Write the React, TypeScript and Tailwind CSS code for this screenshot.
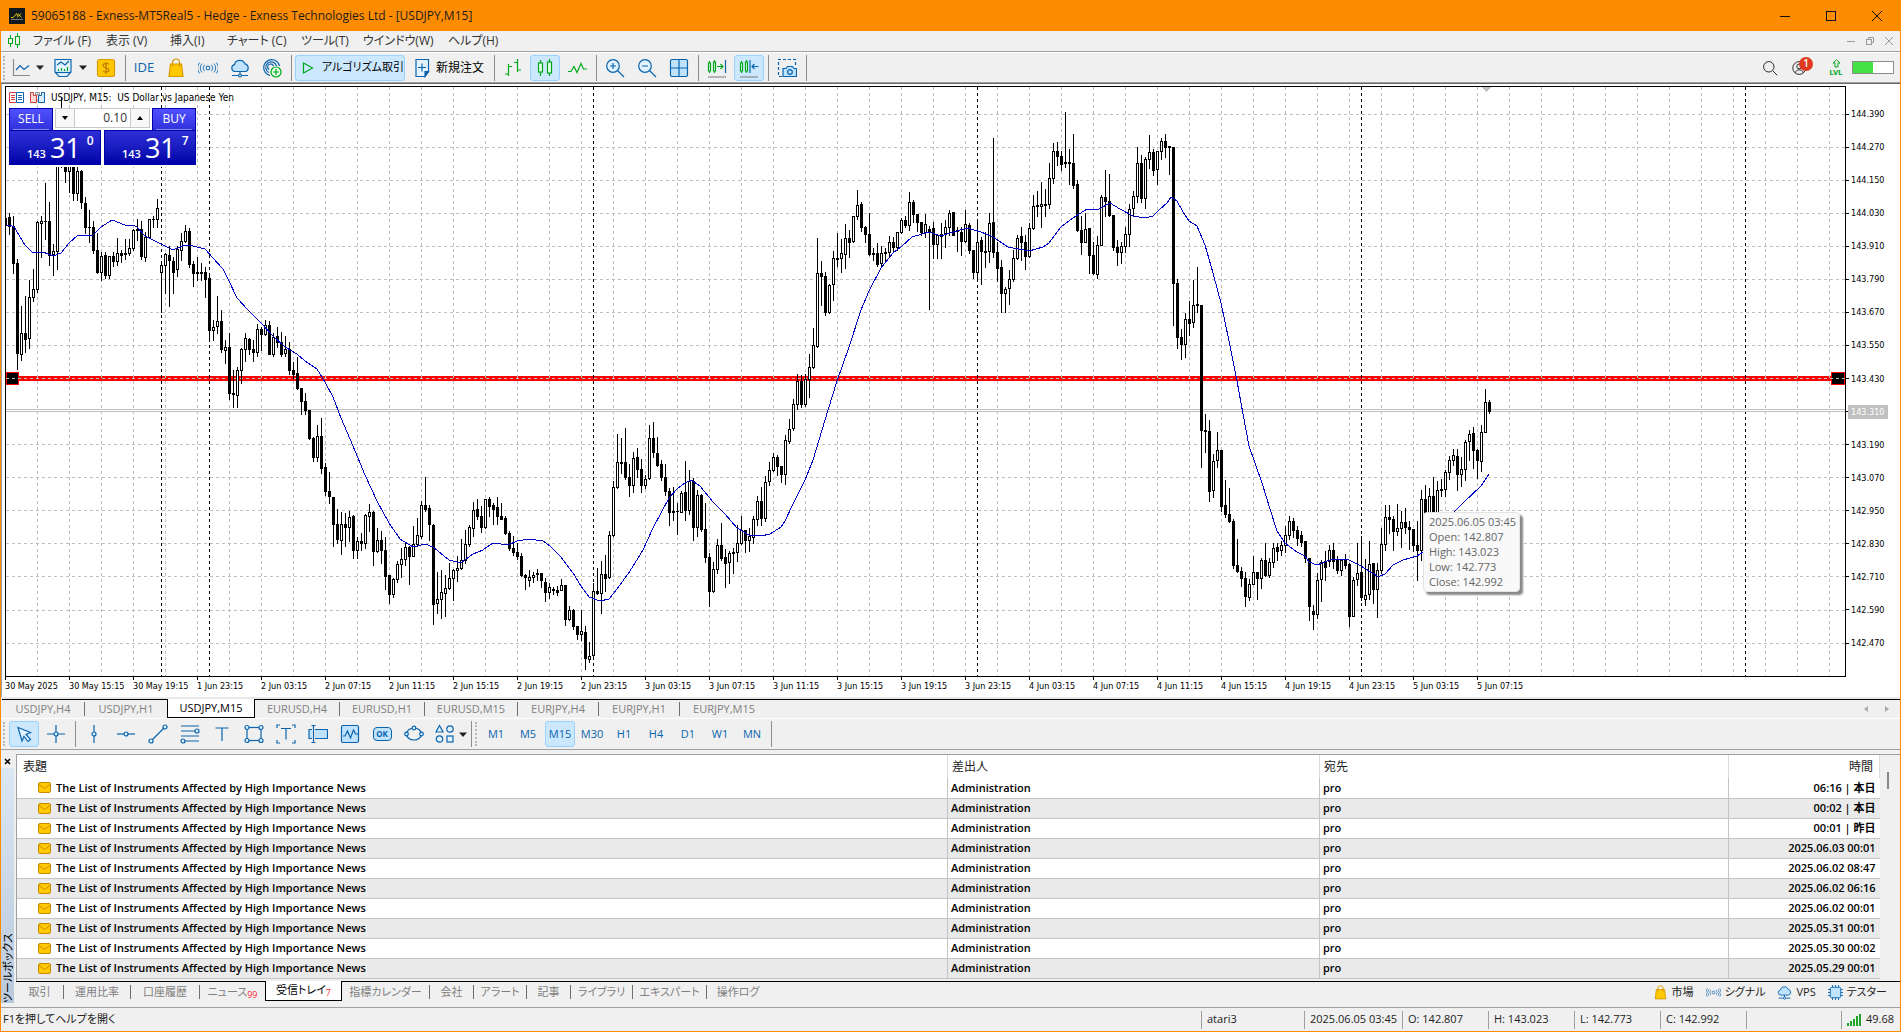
import { useState } from "react";
import type { ReactNode } from "react";

interface Run {
  top: number;
  unit: number;
  bars: string;
}

// high,top,bottom,low,filled for every M15 bar; one run per scale
const RUNS: Run[] = [
  {
    top: -7,
    unit: 2.529,
    bars: `345,350,366,372,1 337,349,371,391,1 346,370,464,490,1 453,463,692,733,1 572,641,694,710,0 548,641,657,690,1 508,549,654,678,0 478,530,549,560,0
358,360,530,538,0 345,358,362,448,0 263,357,359,404,1 311,358,443,469,1 417,433,442,495,0 200,205,433,480,0 47,100,215,222,0 150,180,231,258,1
150,190,231,285,0 160,200,288,304,1 200,231,288,306,0 228,231,310,326,1 298,312,373,388,1 331,372,374,411,1 358,372,430,440,1 388,430,486,490,1
436,446,487,507,0 436,444,495,502,1 446,447,495,502,0 435,446,459,472,1 400,438,459,468,0 430,438,443,462,1 403,438,442,455,0 404,427,438,444,0
378,380,426,430,0 354,379,381,405,1 357,379,447,453,1 386,398,449,460,0 352,353,398,402,0 346,352,354,372,1 302,325,353,372,0 458,468,487,587,0
438,441,468,539,0 420,443,457,574,1 448,458,487,539,1 422,428,480,496,0 389,408,430,456,0 369,384,409,410,0 376,384,467,474,1 460,466,490,521,1
450,488,490,507,1 464,488,490,507,1 474,488,505,550,1 498,501,634,658,1 609,625,634,658,0 547,610,624,640,0 582,610,682,690,1 660,676,684,716,0
640,676,793,809,1 735,793,796,829,1 727,735,798,829,0 679,682,735,768,0 640,655,682,712,0 654,656,682,693,1 660,681,690,711,1 618,630,688,700,0
625,630,643,684,1 607,622,643,645,0 612,622,693,694,1 640,652,694,700,0 627,648,664,676,1 638,664,693,700,1 649,681,691,700,0 665,682,735,744,1
715,734,746,754,1 703,741,780,783,1 780,780,813,846,1 792,813,836,846,1 835,836,906,910,1 905,906,955,966,1 873,901,954,964,0 856,901,983,996,1
970,981,1041,1051,1 993,1040,1054,1072,1 1055,1056,1124,1179,1 1087,1125,1162,1171,1 1095,1124,1164,1201,0 1096,1125,1132,1180,1 1092,1106,1131,1166,0 1101,1105,1190,1209,1
1158,1166,1190,1211,0 1147,1166,1173,1190,1 1100,1101,1172,1184,0 1073,1093,1104,1142,0 1092,1094,1193,1229,1 1133,1164,1193,1195,0 1142,1164,1190,1222,1 1156,1190,1255,1289,1
1253,1253,1300,1323,1 1260,1263,1300,1309,0 1218,1225,1264,1270,0 1186,1212,1226,1258,0 1172,1182,1212,1229,0 1180,1182,1204,1277,1 1128,1174,1204,1206,0 1110,1153,1175,1181,0
1066,1076,1155,1160,0 1005,1076,1086,1092,1 1076,1083,1124,1165,1 1125,1126,1327,1377,1 1246,1313,1325,1350,0 1240,1295,1315,1361,0 1253,1287,1298,1356,0 1222,1260,1287,1288,0
1238,1240,1260,1317,0 1206,1235,1241,1268,0 1163,1215,1236,1238,0 1139,1174,1214,1222,0 1127,1131,1174,1180,0 1068,1088,1135,1155,0 1062,1086,1104,1112,1 1078,1103,1131,1145,1
1060,1060,1131,1133,0 1056,1060,1078,1104,1 1070,1077,1085,1125,1 1055,1080,1104,1124,1`,
  },
  {
    top: 93,
    unit: 3,
    bars: `970,1009,1017,1019,1 1008,1015,1061,1062,1 1053,1060,1106,1111,1 1069,1105,1118,1127,1 1090,1117,1130,1139,1 1120,1129,1187,1190,1 1182,1185,1193,1229,1 1171,1191,1202,1218,0
1177,1187,1193,1206,0 1167,1180,1184,1200,1 1180,1180,1202,1223,1 1196,1206,1237,1265,1 1211,1221,1236,1256,0 1223,1228,1232,1244,1 1220,1230,1236,1247,1 1199,1216,1230,1232,0
1216,1216,1319,1337,1 1280,1291,1319,1322,0 1288,1290,1339,1348,1 1338,1339,1363,1377,1 1290,1354,1364,1382,0 1338,1357,1435,1469,1 1386,1429,1437,1448,0 1210,1234,1427,1436,0
1164,1234,1239,1243,1 1143,1183,1241,1299,0 1125,1183,1195,1233,1 1053,1066,1193,1196,0 904,922,1066,1068,0 762,847,922,925,0 774,846,849,880,1 744,847,892,899,1
852,892,917,948,1 816,836,917,937,0 804,832,868,892,1 837,868,917,938,1 885,898,917,926,0 735,775,895,897,0 727,775,818,831,1 771,820,856,858,1
840,853,892,900,1 852,892,934,945,1 925,934,997,1035,1 921,993,997,1020,1 970,993,995,1062,1 934,940,997,998,0 843,937,991,1022,1 870,903,990,1002,0
894,904,1043,1080,1 930,946,1042,1068,0 942,946,1048,1054,1 970,1048,1133,1147,1 1119,1132,1235,1280,1 1147,1168,1234,1238,0 1077,1096,1168,1181,0 1030,1096,1135,1142,1
1108,1133,1151,1223,1 1114,1120,1147,1209,0 1106,1118,1121,1181,1 1036,1090,1118,1145,0 1009,1051,1091,1093,0 1050,1051,1082,1118,1 1046,1069,1081,1115,0 1010,1018,1072,1091,0
948,964,1018,1035,0 922,964,1015,1037,1 889,907,1015,1025,0 847,871,904,915,0 820,832,871,874,0 825,832,859,886,1 858,859,883,906,1 766,781,883,914,0
717,748,784,790,0 657,673,745,751,0 582,604,673,689,0 586,604,673,682,1 583,598,673,678,0 522,562,597,651,0 445,496,562,566,0 174,280,499,502,0
243,280,290,377,1 277,290,398,406,1 313,316,397,399,0 213,235,313,361,0 159,235,238,258,1 177,220,234,276,0 132,175,222,264,0 150,175,186,231,1
108,109,184,187,0 30,76,108,118,0 67,73,142,154,1 138,141,163,187,1 99,163,223,225,1 205,220,224,242,1 189,220,254,260,1 199,220,251,259,0
204,217,221,248,0 168,187,217,229,0 172,187,203,216,1 156,157,202,211,0 114,121,157,160,0 108,121,136,142,1 36,67,136,150,0 60,67,102,127,1
102,102,127,153,1 126,127,158,165,1 102,133,157,171,0 138,147,153,387,1 126,145,193,235,1 165,166,193,235,0 129,163,168,235,1 121,142,160,202,0
90,99,142,165,0 96,97,165,166,1 141,150,154,213,1`,
  },
  {
    top: -7,
    unit: 2.529,
    bars: `372,385,409,444,1 331,366,408,411,0 364,367,431,440,1 430,431,487,501,1 354,410,487,502,0 398,407,434,516,1 386,434,436,474,1 337,363,434,462,0
147,360,436,448,1 410,436,477,510,1 456,475,540,587,1 526,530,540,588,0 481,504,528,567,0 432,451,504,510,0 392,401,451,453,0 374,397,411,456,1
392,411,447,478,1 364,375,447,448,0 292,320,376,378,0 283,317,321,346,1 258,315,320,372,0 276,314,317,346,1 212,248,315,326,0 160,180,248,262,0
159,182,194,217,1 180,193,214,228,1 83,209,211,222,1 175,209,211,264,1 137,210,266,275,1 255,264,381,384,1 346,380,411,442,1 337,378,411,412,0
375,375,444,490,1 411,444,490,492,1 397,418,492,503,0 291,297,418,419,0 230,297,308,346,1 240,307,342,345,1 342,343,424,430,1 406,423,437,468,1
411,421,436,465,0 372,390,421,437,0 315,327,390,421,0 283,294,325,346,0 170,210,294,310,0 192,210,300,310,1 196,201,299,325,0 140,183,200,224,0
175,183,228,242,1 180,181,227,264,0 149,155,181,202,0 137,155,171,197,1 168,169,171,238,1 170,171,514,620,1 505,514,652,678,1 630,651,669,706,1
590,605,669,702,0 561,605,615,646,1 507,570,614,625,0 473,568,571,588,1 570,571,886,979,1 847,886,889,942,1 860,889,1041,1065,1 947,965,1038,1057,0
892,937,963,980,0 936,937,1078,1092,1 1014,1076,1100,1107,1 1034,1099,1116,1118,1 1111,1116,1228,1236,1 1163,1228,1244,1246,1 1232,1243,1261,1281,1 1246,1260,1307,1332,1
1262,1275,1308,1317,0 1206,1246,1276,1277,0 1245,1246,1261,1314,1 1209,1215,1261,1286,0 1172,1215,1253,1256,1 1210,1220,1252,1257,0 1173,1185,1220,1232,0 1172,1182,1193,1214,1
1166,1178,1190,1203,0 1130,1152,1178,1195,0 1105,1116,1152,1162,0 1110,1116,1140,1156,1 1129,1139,1160,1177,1 1142,1153,1170,1180,1 1166,1168,1211,1221,1 1209,1211,1332,1368,1
1328,1343,1352,1390,1 1248,1266,1352,1361,0 1214,1220,1264,1320,0 1193,1217,1232,1267,1 1176,1190,1217,1231,0 1171,1190,1218,1236,1 1206,1216,1241,1247,1 1214,1215,1241,1254,0
1201,1214,1228,1235,1 1224,1225,1357,1383,1 1258,1266,1357,1358,0 1172,1247,1264,1278,0 1155,1245,1309,1316,1 1213,1303,1313,1330,0 1166,1225,1300,1313,0 1222,1224,1289,1325,1
1224,1240,1288,1360,0 1133,1174,1240,1248,0`,
  },
  {
    top: 263,
    unit: 3,
    bars: `465,501,583,600,0 465,501,509,551,1 498,507,544,600,1 462,535,545,557,0 483,517,535,591,0 475,517,531,551,1 513,531,539,599,1 537,538,586,604,1
513,586,602,690,1 420,448,601,630,0 405,448,500,560,1 414,439,560,600,0 381,439,520,560,1 393,421,540,560,0 387,418,421,438,1 360,367,418,440,0
318,331,367,388,0 297,316,331,345,0 297,319,374,422,1 321,358,374,408,0 271,277,358,392,0 240,253,274,330,0 231,250,301,355,1 298,300,331,384,1
226,246,334,365,0 117,157,247,248,0 150,157,185,189,1`,
  },
];

const candles = RUNS.flatMap(({ top, unit, bars }) =>
  bars.split(/\s+/).map((bar) => {
    const [high, open, close, low, filled] = bar.split(",").map(Number);
    const y = (v: number) => Math.floor(top + v / unit);
    return { high: y(high), open: y(open), close: y(close), low: y(low), filled: filled === 1 };
  })
);

const AVERAGE = [
  { left: -6, top: -7, unit: 2.529, points: "17,370 34,366 45,374 60,398 75,417 98,438 130,436 160,446 184,437 208,411 235,393 280,393 304,372 335,355 376,367 400,366 412,373 436,395 484,416 520,429 556,418 580,420 615,428 640,450 670,477 688,509 712,551 745,581 784,615 820,647 856,675 892,693 916,711 952,730 976,765 1000,801 1024,856 1060,925 1096,1000 1132,1064 1168,1120 1200,1162 1240,1180 1276,1174 1300,1182 1348,1214 1384,1222 1420,1200 1450,1188" },
  { left: 474, top: 93, unit: 3, points: "12,1106 40,1090 85,1094 112,1082 148,1078 190,1084 210,1098 244,1132 280,1180 304,1217 328,1250 360,1264 388,1257 412,1228 450,1173 490,1110 520,1045 568,955 592,928 616,908 632,901 660,918 700,965 735,1002 772,1043 808,1065 844,1069 870,1062 904,1040 916,1022 940,972 976,900 1000,840 1036,720 1072,604 1108,500 1144,390 1168,333 1204,265 1240,220 1264,202 1295,172 1348,156 1384,169 1410,159 1430,153" },
  { left: 894, top: -7, unit: 2.529, points: "172,381 200,375 244,384 280,397 325,423 388,433 430,422 448,411 484,372 520,348 560,325 590,328 630,312 660,327 700,343 735,348 760,344 780,327 800,310 812,295 830,305 850,333 868,357 892,370 916,418 940,488 964,565 988,660 1012,760 1030,845 1048,925 1085,1020 1110,1085 1132,1141 1156,1171 1192,1194 1215,1205 1228,1218 1252,1226 1290,1213 1340,1211 1384,1228 1432,1255" },
  { left: 1374, top: 263, unit: 3, points: "0,679 15,673 40,645 70,629 112,618 128,607 140,590 180,540 225,482 250,460 304,408 326,373" },
];

const averageLine = AVERAGE.flatMap(({ left, top, unit, points }) =>
  points.split(" ").map((p) => {
    const [x, y] = p.split(",").map(Number);
    return `${Math.round(left + x / 3)},${Math.round(top + y / unit)}`;
  })
).join(" ");

const PRICES = ["144.390", "144.270", "144.150", "144.030", "143.910", "143.790", "143.670", "143.550", "143.430", "143.310", "143.190", "143.070", "142.950", "142.830", "142.710", "142.590", "142.470"];
const TIMES = ["30 May 2025", "30 May 15:15", "30 May 19:15", "1 Jun 23:15", "2 Jun 03:15", "2 Jun 07:15", "2 Jun 11:15", "2 Jun 15:15", "2 Jun 19:15", "2 Jun 23:15", "3 Jun 03:15", "3 Jun 07:15", "3 Jun 11:15", "3 Jun 15:15", "3 Jun 19:15", "3 Jun 23:15", "4 Jun 03:15", "4 Jun 07:15", "4 Jun 11:15", "4 Jun 15:15", "4 Jun 19:15", "4 Jun 23:15", "5 Jun 03:15", "5 Jun 07:15"];
const DAY_BREAKS = [155, 203, 587, 971, 1355, 1739];

const MENUS = [
  { label: "ファイル (F)", width: "w-[73px]" },
  { label: "表示 (V)", width: "w-16" },
  { label: "挿入(I)", width: "w-[57px]" },
  { label: "チャート (C)", width: "w-[74px]" },
  { label: "ツール(T)", width: "w-[62px]" },
  { label: "ウインドウ(W)", width: "w-[85px]" },
  { label: "ヘルプ(H)", width: "w-16" },
];

const CHART_TABS = [
  { label: "USDJPY,H4", width: "w-[83px]" },
  { label: "USDJPY,H1", width: "w-[82px]" },
  { label: "USDJPY,M15", width: "w-[88px]" },
  { label: "EURUSD,H4", width: "w-[85px]" },
  { label: "EURUSD,H1", width: "w-[85px]" },
  { label: "EURUSD,M15", width: "w-[93px]" },
  { label: "EURJPY,H4", width: "w-[81px]" },
  { label: "EURJPY,H1", width: "w-[81px]" },
  { label: "EURJPY,M15", width: "w-[88px]" },
];

const TOOLBOX_TABS = [
  { label: "取引", width: "w-12" },
  { label: "運用比率", width: "w-[67px]" },
  { label: "口座履歴", width: "w-[69px]" },
  { label: "ニュース", width: "w-[65px]", count: "99" },
  { label: "受信トレイ", width: "w-[77px]", count: "7" },
  { label: "指標カレンダー", width: "w-[88px]" },
  { label: "会社", width: "w-11" },
  { label: "アラート", width: "w-[53px]" },
  { label: "記事", width: "w-11" },
  { label: "ライブラリ", width: "w-[62px]" },
  { label: "エキスパート", width: "w-[74px]" },
  { label: "操作ログ", width: "w-[62px]" },
];

const MAIL_TIMES = ["06:16 | 本日", "00:02 | 本日", "00:01 | 昨日", "2025.06.03 00:01", "2025.06.02 08:47", "2025.06.02 06:16", "2025.06.02 00:01", "2025.05.31 00:01", "2025.05.30 00:02", "2025.05.29 00:01"];
const PERIODS = ["M1", "M5", "M15", "M30", "H1", "H4", "D1", "W1", "MN"];

function Icon({ children, size = 20, color = "#0a64ad" }: { children: ReactNode; size?: number; color?: string }) {
  return (
    <svg width={size} height={size} viewBox="0 0 20 20" fill="none" stroke={color} strokeWidth="1.2" className="shrink-0">
      {children}
    </svg>
  );
}

const Arrow = () => (
  <svg width="8" height="5" viewBox="0 0 8 5" className="shrink-0"><path d="M0 0.5h8L4 5z" fill="#222" /></svg>
);

const BagIcon = ({ size = 20 }: { size?: number }) => (
  <Icon size={size} color="#d99a00">
    <path d="M6.5 6V4.500a3.500 3.500 0 0 1 7 0V6" />
    <path d="M4.500 6h11l1.500 12.500h-14z" fill="#ffc800" />
    <path d="M6.500 5v4M13.500 5v4" />
  </Icon>
);
const SignalIcon = ({ size = 20 }: { size?: number }) => (
  <Icon size={size} color="#2c7ab8">
    <circle cx="10" cy="10" r="1.800" />
    <path d="M6.500 6.800a4.800 4.800 0 0 0 0 6.400M13.500 6.800a4.800 4.800 0 0 1 0 6.400M4 5.500a7 7 0 0 0 0 9M16 5.500a7 7 0 0 1 0 9M1.600 4.500a9.500 9.500 0 0 0 0 11M18.400 4.500a9.500 9.500 0 0 1 0 11" strokeWidth="1" />
  </Icon>
);
const CloudIcon = ({ size = 20 }: { size?: number }) => (
  <Icon size={size}>
    <path d="M5 13.500a3.500 3.500 0 0 1-.5-6.900A5.500 5.500 0 0 1 15 5.800a4 4 0 0 1 .5 7.700z" fill="#bfe3ff" />
    <path d="M10 13.500V16M2 17.500h6M12 17.500h6" />
    <circle cx="10" cy="17.500" r="1.500" />
  </Icon>
);

interface ToolProps {
  label: string;
  children: ReactNode;
  active?: boolean;
  width?: string;
}

function Tool({ label, children, active = false, width = "w-[30px] justify-center" }: ToolProps) {
  return (
    <button
      type="button"
      aria-label={label}
      className={`flex h-[26px] shrink-0 items-center rounded-[3px] border ${width} ${active ? "border-[#99d1ff] bg-[#cce8ff]" : "border-transparent"}`}
    >
      {children}
    </button>
  );
}

const Divider = () => (
  <div className="flex h-[26px] w-1 shrink-0 justify-center"><div className="w-px bg-[#8c8c8c]" /></div>
);
const Grip = () => <div className="h-6 w-1 shrink-0 border-l-2 border-dotted border-[#b8b8b8]" />;

function TitleBar() {
  return (
    <header className="flex h-[31px] items-center bg-[#ff8c00] pl-2">
      <svg width="16" height="16" viewBox="0 0 16 16" className="mr-1.5">
        <rect width="16" height="16" fill="#111820" />
        <path d="M2 9.500h2.500l3-4 1.500 3M9 5.500l3.500 4M8 9.500l4-4" stroke="#e0c000" fill="none" />
        <path d="M2 11.500h12" stroke="#777" />
      </svg>
      <h1 className="grow text-xs text-[#1c1c1c]">59065188 - Exness-MT5Real5 - Hedge - Exness Technologies Ltd - [USDJPY,M15]</h1>
      <button type="button" aria-label="Minimize" className="flex w-[46px] justify-center">
        <svg width="10" height="10" stroke="#111"><path d="M0 5.500h10" /></svg>
      </button>
      <button type="button" aria-label="Maximize" className="flex w-[46px] justify-center">
        <svg width="10" height="10" stroke="#111" fill="none"><rect x=".5" y=".5" width="9" height="9" /></svg>
      </button>
      <button type="button" aria-label="Close" className="flex w-[46px] justify-center">
        <svg width="10" height="10" stroke="#111"><path d="M0 0l10 10M10 0L0 10" /></svg>
      </button>
    </header>
  );
}

function MenuBar() {
  return (
    <nav className="flex h-[21px] items-center border-b border-[#a0a0a0] pl-1.5 text-xs text-[#333] [font-feature-settings:'palt']">
      <svg width="14" height="16" viewBox="0 0 14 16" fill="none" stroke="#00a81c" className="mr-3">
        <path d="M3.500 2v3M3.500 11v3M10.500 0v3M10.500 12v3" />
        <rect x="1.500" y="5.500" width="4" height="5" />
        <rect x="8.500" y="3.500" width="4" height="8" />
      </svg>
      {MENUS.map((menu) => (
        <button key={menu.label} type="button" className={`shrink-0 text-left whitespace-nowrap ${menu.width}`}>{menu.label}</button>
      ))}
      <div className="ml-auto flex gap-[9px] pr-1.5">
        <button type="button" aria-label="Minimize chart"><svg width="10" height="10" stroke="#999"><path d="M1 5.500h8" /></svg></button>
        <button type="button" aria-label="Restore chart">
          <svg width="10" height="10" stroke="#999" fill="none"><rect x="1.500" y="3.500" width="5" height="5" /><path d="M3.500 3V1.500h5v5H7" /></svg>
        </button>
        <button type="button" aria-label="Close chart"><svg width="10" height="10" stroke="#999"><path d="M1 1l8 8M9 1L1 9" /></svg></button>
      </div>
    </nav>
  );
}

function MainToolbar() {
  return (
    <div className="flex h-[31px] items-center gap-0.5 border-t border-b border-t-white border-b-[#a0a0a0] pl-0.5 text-xs [font-feature-settings:'palt']">
      <Grip />
      <Tool label="Line chart" width="w-[37px] gap-1.5">
        <Icon><path d="M3.500 1v16.500H20" stroke="#8c8c8c" /><path d="M6 12l4-4.500 4 4 5-4" /></Icon>
        <Arrow />
      </Tool>
      <Tool label="Templates" width="w-[41px] gap-1.5 pl-1">
        <Icon><path d="M2 1.500h16v12.500l-4 4.500H6L2 14z" fill="#e2f2ff" /><path d="M4 7l4-3 4 3 4-4" /><path d="M5.500 13v-2M8.500 13v-3M11.500 13v-2M14.500 13v-4" stroke="#00a81c" /><path d="M2 14.500h16" /></Icon>
        <Arrow />
      </Tool>
      <Tool label="Symbols">
        <Icon color="#d99a00"><rect x="1.500" y="1.500" width="17" height="17" rx="2" fill="#ffc800" /><path d="M13 6.500c-1-1.500-6-1.500-6 1s6 2 6 4.500-5 2.500-6 1M10 4v12" stroke="#b87a00" /></Icon>
      </Tool>
      <Divider />
      <Tool label="IDE"><span className="text-[13px] text-[#0a64ad]">IDE</span></Tool>
      <Tool label="Market"><BagIcon /></Tool>
      <Tool label="Signals"><SignalIcon /></Tool>
      <Tool label="VPS"><CloudIcon /></Tool>
      <Tool label="Copy trading">
        <Icon><path d="M8 17.500A8 8 0 1 1 17.500 8M7 14.500A5.500 5.500 0 1 1 14.500 8M7 11.500A3 3 0 1 1 11.500 8" /><circle cx="14" cy="14" r="5" stroke="#00a81c" fill="#e6ffe9" /><path d="M14 11v6M11 14h6" stroke="#00a81c" /></Icon>
      </Tool>
      <Divider />
      <Tool label="アルゴリズム取引" active width="w-[110px] gap-1 pl-0.5">
        <Icon color="#00a81c"><path d="M5.500 5l9 5-9 5z" /></Icon>
        <span className="text-[11px] whitespace-nowrap">アルゴリズム取引</span>
      </Tool>
      <Tool label="新規注文" width="w-[83px] gap-1 pl-1">
        <Icon><path d="M4 1.500h12.500v12L13 18.500H4z" fill="#e2f2ff" /><path d="M10 5.500v8M6 9.500h8" /><path d="M16.500 13.500H13v5z" fill="#0a64ad" /></Icon>
        <span>新規注文</span>
      </Tool>
      <Divider />
      <Tool label="Bar chart"><Icon color="#00a81c"><path d="M5.500 6v12M2 16h3.500M5.500 8.500H9M14.500 1v13M11 4.500h3.500M14.500 12H18" /></Icon></Tool>
      <Tool label="Candlesticks" active>
        <Icon color="#00a81c"><path d="M5.500 2v16M14.500 1v17" /><rect x="3.500" y="5" width="4" height="9" fill="#e6ffe9" /><rect x="12.500" y="4" width="4" height="11" fill="#e6ffe9" /></Icon>
      </Tool>
      <Tool label="Line"><Icon color="#00a81c"><path d="M1 13.500h3l3-5 3 6 4-9 2.500 5.500H20" /></Icon></Tool>
      <Divider />
      <Tool label="Zoom in"><Icon><circle cx="8" cy="8" r="6.300" fill="#e2f2ff" /><path d="M12.500 12.500l6.500 6.500M8 5v6M5 8h6" /></Icon></Tool>
      <Tool label="Zoom out"><Icon><circle cx="8" cy="8" r="6.300" fill="#e2f2ff" /><path d="M12.500 12.500l6.500 6.500M5 8h6" /></Icon></Tool>
      <Tool label="Tile windows"><Icon><rect x="1.500" y="1.500" width="17" height="17" rx="1.500" fill="#bfe3ff" /><path d="M10 1.500v17M1.500 10h17" /></Icon></Tool>
      <Divider />
      <Tool label="Auto scroll">
        <Icon><g stroke="#00a81c"><path d="M2.500 3v12M7.500 2v13M10 8.500h6M13.500 6l2.500 2.500-2.500 2.500" /><path d="M1.500 5h2v8h-2zM6.500 4h2v9h-2z" fill="#f0f0f0" /></g><path d="M18.500 2v13" /><path d="M1 19h18" stroke="#8c8c8c" /></Icon>
      </Tool>
      <Tool label="Chart shift" active>
        <Icon><g stroke="#00a81c"><path d="M2.500 3v12M7.500 2v13" /><path d="M1.500 5h2v8h-2zM6.500 4h2v9h-2z" fill="#e6ffe9" /></g><path d="M11 2v13M13 8.500h6.500M15.500 6L13 8.500l2.500 2.500" /><path d="M1 19h18" stroke="#8c8c8c" /></Icon>
      </Tool>
      <Divider />
      <Tool label="Screenshot">
        <Icon><path d="M5 18.500H1.500v-17h17V8" strokeDasharray="3 2" /><path d="M6 10.500h3l1.500-2h5l1.500 2h2.500v8H6z" fill="#bfe3ff" /><circle cx="13" cy="14" r="2.300" /></Icon>
      </Tool>
      <Divider />
      <div className="ml-auto flex items-center pr-1.5">
        <Tool label="Search"><Icon color="#222" size={16}><circle cx="8.500" cy="8.500" r="6.500" /><path d="M13.500 13.500l5.500 5.500" /></Icon></Tool>
        <div className="relative">
          <Tool label="Account"><Icon color="#222" size={16}><circle cx="9" cy="10" r="8" /><circle cx="9" cy="8" r="3" /><path d="M4 16c1-5 9-5 10 0" /></Icon></Tool>
          <span className="absolute top-0.5 left-3.5 flex h-3.5 w-3.5 items-center justify-center rounded-full bg-[#e03a20] text-[10px] font-semibold text-white">1</span>
        </div>
        <div className="ml-1.5 flex w-[30px] flex-col items-center gap-px text-[#00a81c]">
          <svg width="9" height="9" viewBox="0 0 9 9" fill="none" stroke="currentColor" className="block shrink-0"><path d="M4.500 .7L8 4H6v4H3V4H1z" /></svg>
          <span className="font-['Roboto',sans-serif] text-[8px] leading-[8px] font-bold">LVL</span>
        </div>
        <div className="ml-px h-[13px] w-[42px] border border-[#8c8c8c] bg-white"><div className="h-full w-1/2 bg-[#43e243]" /></div>
      </div>
    </div>
  );
}

function QuotePanel() {
  const [volume, setVolume] = useState("0.10");
  return (
    <div className="absolute top-[21px] left-[3px] w-[187px] bg-white pb-0.5 text-white">
      <div className="flex h-[22px] justify-between">
        <button type="button" className="w-11 border border-b-0 border-[#0000a8] bg-linear-to-b from-[#5050ff] to-[#3030dc] px-[3px] text-xs">
          <span className="block h-full border-b border-[#8c8cff] leading-5">SELL</span>
        </button>
        <div className="flex h-5 w-[95px] border border-[#c8c8c8] bg-[#f8f8f8]">
          <button type="button" aria-label="Decrease volume" className="flex w-[19px] items-center justify-center"><svg width="6" height="4"><path d="M0 0h6L3 4z" /></svg></button>
          <input aria-label="Volume" value={volume} onChange={(e) => setVolume(e.target.value)} className="w-[57px] border-x border-[#c8c8c8] bg-white pr-[3px] text-right text-xs text-[#333]" />
          <button type="button" aria-label="Increase volume" className="flex w-[19px] items-center justify-center"><svg width="6" height="4"><path d="M0 4h6L3 0z" /></svg></button>
        </div>
        <button type="button" className="w-11 border border-b-0 border-[#0000a8] bg-linear-to-b from-[#5050ff] to-[#3030dc] px-[3px] text-xs">
          <span className="block h-full border-b border-[#8c8cff] leading-5">BUY</span>
        </button>
      </div>
      <div className="flex h-[35px] justify-between">
        <Price minor="0" />
        <Price minor="7" />
      </div>
    </div>
  );
}

function Price({ minor }: { minor: string }) {
  return (
    <div className="flex w-[92px] border border-[#0000a8] bg-linear-to-b from-[#2e2ed8] to-[#0000a8] pl-[17px]">
      <span className="self-end pb-0.5 text-[11px] font-semibold">143</span>
      <span className="ml-1 self-center text-[27px] leading-8">31</span>
      <span className="ml-1.5 pt-0.5 text-xs font-semibold">{minor}</span>
    </div>
  );
}

function Chart() {
  return (
    <main className="border-t border-l border-t-[#696969] border-l-[#a0a0a0] bg-white pt-0.5 pl-[3px] font-['DejaVu_Sans_Condensed','DejaVu_Sans',sans-serif] text-[9px] text-black">
      <div className="flex">
        <div className="relative h-[591px] min-w-0 grow overflow-hidden border border-black">
          <svg width="100%" height="589" className="block" shapeRendering="crispEdges">
            <rect y="289" width="100%" height="5" fill="red" />
            <rect x=".5" y="285.500" width="12" height="12" stroke="red" />
            <svg x="100%" overflow="visible"><rect x="-13.500" y="285.500" width="13" height="12" stroke="red" /></svg>
            <g stroke="#c0c0c0" strokeDasharray="3 3">
              {Array.from({ length: 70 }, (_, i) => <line key={i} x1={31.5 + i * 32} x2={31.5 + i * 32} y2="589" />)}
              {PRICES.map((price, i) => {
                const y = Math.floor(27 + i * 33.07) + 0.5;
                return <line key={price} y1={y} y2={y} x2="100%" />;
              })}
            </g>
            <g stroke="black" strokeDasharray="3 3">
              {DAY_BREAKS.map((x) => <line key={x} x1={x + 0.5} x2={x + 0.5} y2="589" />)}
            </g>
            <rect y="322" width="100%" height="1" fill="#c0c0c0" />
            <rect y="324" width="100%" height="1" fill="#c0c0c0" />
            {candles.map((c, i) => {
              const x = i * 4 - 1;
              const body = Math.max(c.close - c.open, 0) + 1;
              return (
                <g key={i}>
                  <rect x={x} y={c.high} width="1" height={c.low - c.high + 1} />
                  <rect x={x - 1} y={c.open} width="3" height={body} />
                  {!c.filled && body > 2 && <rect x={x} y={c.open + 1} width="1" height={body - 2} fill="white" />}
                </g>
              );
            })}
            <polyline points={averageLine} fill="none" stroke="#0000c8" />
            <path d="M1475 0h10l-5 5z" fill="#c0c0c0" />
          </svg>
          <div className="absolute top-1 left-[3px] flex items-center text-[10px] leading-[14px] whitespace-pre">
            <svg width="15" height="12" viewBox="0 0 15 12" fill="none" className="mr-1.5">
              <path d="M7.500 .5h-7v10h7M2 3.500h4M2 5.500h4M2 7.500h4" stroke="#d93a3a" />
              <path d="M7.500 .5h7v10h-7zM9 3.500h4M9 5.500h4M9 7.500h4" stroke="#0a64ad" />
            </svg>
            <svg width="15" height="12" viewBox="0 0 15 12" fill="none" className="mr-1.5">
              <path d="M.5 .5h3v3h3v7h-6z" stroke="#d93a3a" fill="#ffd8d8" />
              <path d="M14.500 .5h-3v3h-3v7h6z" stroke="#0a64ad" fill="#d8eeff" />
              <rect x="5.500" y=".5" width="4" height="2" stroke="#999" />
            </svg>
            <span>USDJPY, M15:  US Dollar vs Japanese Yen</span>
          </div>
          <div className="font-['Open_Sans','Noto_Sans_CJK_JP',sans-serif]"><QuotePanel /></div>
          <div className="absolute top-[425px] left-[1417px] h-20 w-[97px] rounded-sm border border-[#e4e4e4] bg-[#f9f9f9] px-[5px] pt-px font-['Open_Sans','Noto_Sans_CJK_JP',sans-serif] text-[11px] leading-[15px] whitespace-nowrap text-[#666] shadow-[3px_3px_2px_#888]">
            <p>2025.06.05 03:45</p>
            <p>Open: 142.807</p>
            <p>High: 143.023</p>
            <p>Low: 142.773</p>
            <p>Close: 142.992</p>
          </div>
        </div>
        <div className="flex h-[563px] w-[54px] shrink-0 flex-col justify-between pt-[22px]">
          {PRICES.map((price) => (
            <div key={price} className="flex h-3 items-center gap-px">
              <div className="h-px w-[3px] bg-black" />
              <span className={price === "143.310" ? "-ml-0.5 bg-[#c0c0c0] py-px pr-1 pl-[3px] leading-3 text-white" : "pl-px leading-3"}>{price}</span>
            </div>
          ))}
        </div>
      </div>
      <div className="flex h-5 overflow-hidden">
        {TIMES.map((time) => (
          <div key={time} className="w-16 shrink-0 leading-3 whitespace-nowrap">
            <div className="h-[3px] w-px bg-black" />
            {time}
          </div>
        ))}
      </div>
    </main>
  );
}

function ChartTabs() {
  return (
    <div className="flex h-[22px] border-t-2 border-b border-t-[#e8e8e8] border-b-white pl-px">
      <div role="tablist" className="flex grow border-t border-black text-xs text-[#808080]">
        {CHART_TABS.map(({ label, width }, i) => (
          <button
            key={label}
            type="button"
            role="tab"
            aria-selected={i === 2}
            className={`flex shrink-0 items-center justify-center whitespace-nowrap ${width} ${i === 2 ? "-mt-px border-x border-b border-black bg-white text-black" : ""}`}
          >
            <span className="grow text-[11px]">{label}</span>
            {i !== 1 && i !== 2 && i !== 8 && <span className="h-3.5 w-px bg-[#707070]" />}
          </button>
        ))}
        <div className="ml-auto flex items-center gap-[17px] pr-[11px]">
          <button type="button" aria-label="Previous tab"><svg width="4" height="6" fill="#aaa"><path d="M4 0v6L0 3z" /></svg></button>
          <button type="button" aria-label="Next tab"><svg width="4" height="6" fill="#aaa"><path d="M0 0v6l4-3z" /></svg></button>
        </div>
      </div>
    </div>
  );
}

function DrawingToolbar() {
  const knot = "#e2f2ff";
  return (
    <div className="flex h-[31px] items-center gap-0.5 border-b border-[#a0a0a0] pl-0.5 text-xs text-[#0a64ad]">
      <Grip />
      <Tool label="Cursor" active><Icon><path d="M4 3.500l12.500 5-4.500 2 4.500 5-2.500 2-4-5-2 4.500z" fill="#e2f2ff" /></Icon></Tool>
      <Tool label="Crosshair"><Icon><path d="M10 1v18M1 10h18" /><circle cx="10" cy="10" r="2" fill={knot} /></Icon></Tool>
      <Divider />
      <Tool label="Vertical line"><Icon><path d="M10 1v18" /><circle cx="10" cy="10" r="2" fill={knot} /></Icon></Tool>
      <Tool label="Horizontal line"><Icon><path d="M1 10h18" /><circle cx="10" cy="10" r="2" fill={knot} /></Icon></Tool>
      <Tool label="Trend line"><Icon><path d="M3 17L17 3" /><circle cx="3" cy="17" r="2" fill={knot} /><circle cx="17" cy="3" r="2" fill={knot} /></Icon></Tool>
      <Tool label="Fibonacci"><Icon><path d="M1 2h18M1 7h14M1 12h18M5 17h14" /><circle cx="17" cy="7" r="2" fill={knot} /><circle cx="3" cy="17" r="2" fill={knot} /></Icon></Tool>
      <Tool label="Text"><Icon><path d="M3.500 4h13M10 4v13" /></Icon></Tool>
      <Tool label="Rectangle">
        <Icon><rect x="3" y="3.500" width="14" height="13" /><g fill={knot}><circle cx="3" cy="3.500" r="2" /><circle cx="17" cy="3.500" r="2" /><circle cx="3" cy="16.500" r="2" /><circle cx="17" cy="16.500" r="2" /></g></Icon>
      </Tool>
      <Tool label="Text label"><Icon><path d="M5 4.500h10M10 4.500v11M1 4V1h3M16 1h3v3M1 16v3h3M16 19h3v-3" /></Icon></Tool>
      <Tool label="Edit"><Icon><path d="M7 5.500h12.500v9H7M4 5.500H1v9h3" fill="#bfe3ff" /><path d="M5.500 2v16M3.500 1.500h4M3.500 18.500h4" /></Icon></Tool>
      <Tool label="Indicator"><Icon><rect x="1.500" y="1.500" width="17" height="17" rx="1.500" fill="#bfe3ff" /><path d="M3 12h2l2.500-5 3 7 3-8 2 4H18" /></Icon></Tool>
      <Tool label="Button">
        <span className="flex h-3.5 w-[19px] items-center justify-center rounded-sm border border-[#0a64ad] bg-[#bfe3ff] text-[8px] font-bold">OK</span>
      </Tool>
      <Tool label="Ellipse">
        <Icon><ellipse cx="10" cy="10" rx="7.500" ry="6" /><g fill={knot}><circle cx="10" cy="4" r="1.800" /><circle cx="2.500" cy="10" r="1.800" /><circle cx="17.500" cy="10" r="1.800" /></g></Icon>
      </Tool>
      <Tool label="Shapes" width="w-9 gap-1 pl-[3px]">
        <Icon><g fill={knot}><path d="M4.500 1.500L8 8H1z" /><circle cx="15" cy="5" r="3.200" /><circle cx="4.500" cy="15" r="3.200" /><rect x="12" y="12" width="6" height="6" /></g></Icon>
        <Arrow />
      </Tool>
      <Divider />
      <Grip />
      {PERIODS.map((period) => (
        <Tool key={period} label={period} active={period === "M15"}><span className="text-[11px]">{period}</span></Tool>
      ))}
      <Divider />
    </div>
  );
}

function Envelope() {
  return (
    <svg width="13" height="11" viewBox="0 0 13 11" fill="#ffc800" stroke="#c98a00" className="shrink-0">
      <rect x=".5" y=".5" width="12" height="10" rx="1.500" />
      <path d="M1 2.500l5.500 4 5.500-4" fill="none" />
    </svg>
  );
}

function Toolbox() {
  return (
    <section className="flex pt-1">
      <div className="flex w-[13px] shrink-0 flex-col items-center">
        <button type="button" aria-label="Close toolbox" className="flex h-[14px] items-center">
          <svg width="7" height="7" stroke="black" strokeWidth="1.500"><path d="M1 1l5 5M6 1L1 6" /></svg>
        </button>
        <div className="flex w-full grow items-center bg-linear-to-b from-[#dbe7f3] to-[#b9c9dc] text-[11px] leading-[13px] [writing-mode:vertical-rl]">
          <span className="mt-auto rotate-180 [font-feature-settings:'palt'] [text-orientation:sideways]">ツールボックス</span>
        </div>
      </div>
      <div className="ml-0.5 min-w-0 grow">
        <div className="flex h-[227px] border-t border-l border-[#a0a0a0]">
          <table className="grow table-fixed border-collapse self-start bg-white text-[11px] text-black">
            <thead>
              <tr className="h-[23px] text-xs text-[#222]">
                <th className="border-r border-[#dcdcdc] pl-1.5 text-left font-normal">表題</th>
                <th className="w-[372px] border-r border-[#dcdcdc] pl-1 text-left font-normal">差出人</th>
                <th className="w-[409px] border-r border-[#dcdcdc] pl-1 text-left font-normal">宛先</th>
                <th className="w-[151px] border-r border-[#dcdcdc] pr-1.5 text-right font-normal">時間</th>
              </tr>
            </thead>
            <tbody className="font-semibold">
              {MAIL_TIMES.map((time) => (
                <tr key={time} className="h-5 border-b border-[#c4c4c4] even:bg-[#eaeaea]">
                  <td className="border-r border-[#c4c4c4] pl-[21px]">
                    <span className="flex items-center gap-[5px] leading-4"><Envelope />The List of Instruments Affected by High Importance News</span>
                  </td>
                  <td className="border-r border-[#c4c4c4] pl-[3px] leading-4">Administration</td>
                  <td className="border-r border-[#c4c4c4] pl-[3px] leading-4">pro</td>
                  <td className="pr-1 text-right leading-4">{time}</td>
                </tr>
              ))}
            </tbody>
          </table>
          <div className="w-5 shrink-0 pt-[17px] pl-[7px]"><div className="h-[17px] w-0.5 bg-[#888]" /></div>
        </div>
        <div className="flex h-[22px] border-t border-black text-xs">
          <div role="tablist" className="flex text-[#808080]">
            {TOOLBOX_TABS.map(({ label, width, count }, i) => (
              <button
                key={label}
                type="button"
                role="tab"
                aria-selected={i === 4}
                className={`flex h-5 shrink-0 items-center whitespace-nowrap [font-feature-settings:'palt'] ${width} ${i === 4 ? "-mt-px border-x border-b border-black bg-white text-black" : ""}`}
              >
                <span className="grow text-[11px]">{label}{count && <sub className="text-[9px] text-red-500">{count}</sub>}</span>
                {i !== 3 && i !== 4 && i !== 11 && <span className="h-3.5 w-px bg-[#707070]" />}
              </button>
            ))}
          </div>
          <div className="ml-auto flex items-center gap-3 pr-[13px] text-[11px] text-[#222] [font-feature-settings:'palt']">
            <button type="button" className="flex items-center gap-1"><BagIcon size={15} />市場</button>
            <button type="button" className="flex items-center gap-1"><SignalIcon size={15} />シグナル</button>
            <button type="button" className="flex items-center gap-1"><CloudIcon size={15} />VPS</button>
            <button type="button" className="flex items-center gap-1">
              <Icon size={15}><path d="M6 0v20M10 0v20M14 0v20M0 6h20M0 10h20M0 14h20" /><rect x="3" y="3" width="14" height="14" rx="2" fill="#bfe3ff" /></Icon>
              テスター
            </button>
          </div>
        </div>
      </div>
    </section>
  );
}

function StatusBar() {
  const cell = "flex h-[18px] items-center border-l border-[#a0a0a0] pl-[5px] whitespace-nowrap";
  return (
    <footer className="mt-1 flex h-6 items-center border-t border-[#a0a0a0] pr-1 pl-0.5 text-[11px] text-[#222]">
      <span className="grow [font-feature-settings:'palt']">F1を押してヘルプを開く</span>
      <span className={`${cell} w-[103px]`}>atari3</span>
      <span className={`${cell} w-[98px]`}>2025.06.05 03:45</span>
      <span className={`${cell} w-[86px]`}>O: 142.807</span>
      <span className={`${cell} w-[86px]`}>H: 143.023</span>
      <span className={`${cell} w-[86px]`}>L: 142.773</span>
      <span className={`${cell} w-[86px]`}>C: 142.992</span>
      <span className={`${cell} w-[95px]`} />
      <span className={`${cell} w-[55px] gap-[5px]`}>
        <svg width="14" height="12" fill="#1fa52c"><path d="M0 9h2v3H0zM3 7h2v5H3zM6 5h2v7H6zM9 2h2v10H9zM12 0h2v12h-2z" /></svg>
        49.68
      </span>
    </footer>
  );
}

export default function App() {
  return (
    <div className="w-full border border-t-0 border-[#ff8c00] bg-[#f0f0f0] font-['Open_Sans','Noto_Sans_CJK_JP',sans-serif]">
      <TitleBar />
      <MenuBar />
      <MainToolbar />
      <Chart />
      <ChartTabs />
      <DrawingToolbar />
      <Toolbox />
      <StatusBar />
    </div>
  );
}
